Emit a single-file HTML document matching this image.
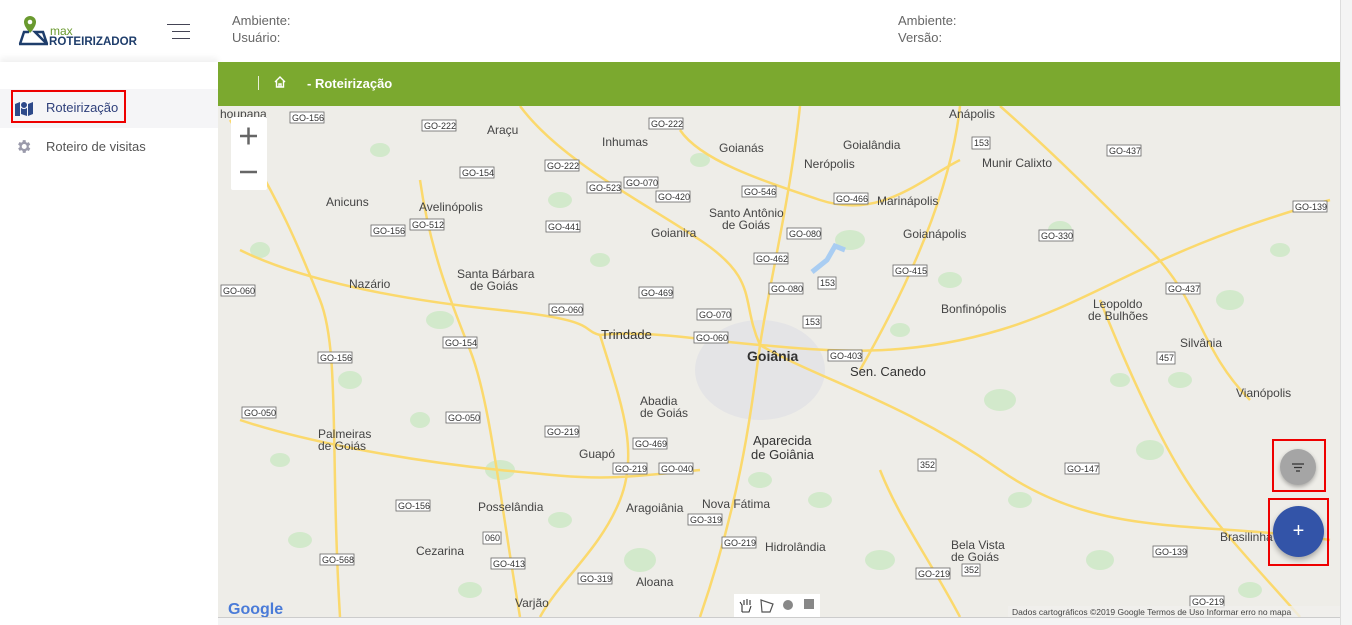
<!DOCTYPE html>
<html><head><meta charset="utf-8"><style>
*{margin:0;padding:0;box-sizing:border-box}
body{width:1352px;height:625px;overflow:hidden;background:#fff;font-family:"Liberation Sans",sans-serif;position:relative}
.hdr{position:absolute;left:0;top:0;width:1340px;height:62px;background:#fff}
.side{position:absolute;left:0;top:62px;width:218px;height:563px;background:#fff;box-shadow:0 -4px 6px rgba(0,0,0,.06)}
.t{position:absolute;font-size:13px;color:#666}
.green{position:absolute;left:218px;top:62px;width:1122px;height:44px;background:#7ba92f;color:#fff;font-size:13px;font-weight:bold}
.sb{position:absolute;left:1340px;top:0;width:12px;height:625px;background:#f4f4f4;border-left:1px solid #ddd}
.city{font-family:"Liberation Sans",sans-serif;font-size:12px;fill:#444}
</style></head><body>
<div class="hdr">
  <svg style="position:absolute;left:18px;top:14px" width="120" height="34" viewBox="0 0 120 34">
    <path d="M12 2a6 6 0 0 1 6 6c0 5-6 11-6 11s-6-6-6-11a6 6 0 0 1 6-6z" fill="#6a9a2f"/><circle cx="12" cy="8" r="2.3" fill="#fff"/>
    <path d="M2 30l4-12h5M17 18h8l4 12z" fill="none" stroke="#1e3d6b" stroke-width="2.5"/>
    <path d="M1 30h29" stroke="#1e3d6b" stroke-width="2.5"/>
    <text x="32" y="21" font-size="12" fill="#6a9a2f" font-family="Liberation Sans">max</text>
    <text x="31" y="31" font-size="12" font-weight="bold" fill="#1e3d6b" font-family="Liberation Sans" textLength="88" lengthAdjust="spacingAndGlyphs">ROTEIRIZADOR</text>
  </svg>
  <div style="position:absolute;left:167px;top:24px;width:23px;height:1px;background:#445"></div>
  <div style="position:absolute;left:172px;top:31px;width:18px;height:1px;background:#445"></div>
  <div style="position:absolute;left:172px;top:38px;width:18px;height:1px;background:#445"></div>
  <div class="t" style="left:232px;top:13px">Ambiente:</div>
  <div class="t" style="left:232px;top:30px">Usuário:</div>
  <div class="t" style="left:898px;top:13px">Ambiente:</div>
  <div class="t" style="left:898px;top:30px">Versão:</div>
</div>
<div class="side">
  <div style="position:absolute;left:0;top:27px;width:218px;height:39px;background:#f5f5f7"></div>
  <div style="position:absolute;left:11px;top:28px;width:115px;height:33px;border:2.5px solid #e00"></div>
  <svg style="position:absolute;left:15px;top:38px" width="18" height="16" viewBox="0 0 18 16"><path d="M0 4l5-2v14l-5 2zM6 2l6 2v12l-6-2zM13 4l5-2v12l-5 2z" fill="#2e4a8a"/><circle cx="9" cy="5" r="3.5" fill="#2e4a8a" stroke="#fff"/></svg>
  <div style="position:absolute;left:46px;top:38px;font-size:13px;color:#2e3f7a">Roteirização</div>
  <svg style="position:absolute;left:15px;top:76px" width="17" height="17" viewBox="0 0 24 24"><path fill="#9a9aab" d="M19.4 13a7.5 7.5 0 0 0 0-2l2.1-1.6-2-3.5-2.5 1a7 7 0 0 0-1.7-1L15 3h-4l-.4 2.7a7 7 0 0 0-1.7 1l-2.5-1-2 3.5L6.6 11a7.5 7.5 0 0 0 0 2l-2.1 1.6 2 3.5 2.5-1a7 7 0 0 0 1.7 1L11 21h4l.4-2.7a7 7 0 0 0 1.7-1l2.5 1 2-3.5zM13 15.5a3.5 3.5 0 1 1 0-7 3.5 3.5 0 0 1 0 7z"/></svg>
  <div style="position:absolute;left:46px;top:77px;font-size:13px;color:#555">Roteiro de visitas</div>
</div>
<div class="green">
  <div style="position:absolute;left:40px;top:14px;width:1px;height:14px;background:#e8f0d8"></div>
  <svg style="position:absolute;left:55px;top:13px" width="14" height="14" viewBox="0 0 14 14"><path d="M2 7l5-5 5 5M3.5 6v6h7V6M6 12V9h2v3" fill="none" stroke="#fff" stroke-width="1.4"/></svg>
  <div style="position:absolute;left:89px;top:14px">- Roteirização</div>
</div>
<svg style="position:absolute;left:218px;top:106px" width="1122" height="511" viewBox="218 106 1122 511">
  <rect x="218" y="106" width="1122" height="511" fill="#eeede8"/>
  <g fill="#d2e9cb">
    <ellipse cx="440" cy="320" rx="14" ry="9"/><ellipse cx="500" cy="470" rx="15" ry="10"/><ellipse cx="300" cy="540" rx="12" ry="8"/>
    <ellipse cx="850" cy="240" rx="15" ry="10"/><ellipse cx="1000" cy="400" rx="16" ry="11"/><ellipse cx="1150" cy="450" rx="14" ry="10"/>
    <ellipse cx="640" cy="560" rx="16" ry="12"/><ellipse cx="880" cy="560" rx="15" ry="10"/><ellipse cx="1060" cy="230" rx="12" ry="9"/>
    <ellipse cx="350" cy="380" rx="12" ry="9"/><ellipse cx="1230" cy="300" rx="14" ry="10"/><ellipse cx="560" cy="200" rx="12" ry="8"/>
    <ellipse cx="760" cy="480" rx="12" ry="8"/><ellipse cx="1100" cy="560" rx="14" ry="10"/><ellipse cx="260" cy="250" rx="10" ry="8"/>
    <ellipse cx="380" cy="150" rx="10" ry="7"/><ellipse cx="600" cy="260" rx="10" ry="7"/><ellipse cx="950" cy="280" rx="12" ry="8"/>
    <ellipse cx="1180" cy="380" rx="12" ry="8"/><ellipse cx="1280" cy="250" rx="10" ry="7"/><ellipse cx="420" cy="420" rx="10" ry="8"/>
    <ellipse cx="560" cy="520" rx="12" ry="8"/><ellipse cx="820" cy="500" rx="12" ry="8"/><ellipse cx="1020" cy="500" rx="12" ry="8"/>
    <ellipse cx="280" cy="460" rx="10" ry="7"/><ellipse cx="900" cy="330" rx="10" ry="7"/><ellipse cx="700" cy="160" rx="10" ry="7"/>
    <ellipse cx="1250" cy="590" rx="12" ry="8"/><ellipse cx="470" cy="590" rx="12" ry="8"/><ellipse cx="1120" cy="380" rx="10" ry="7"/>
  </g>
  <path d="M812 272l15-12 8-14 10 4" stroke="#a9cdf2" stroke-width="5" fill="none"/>
  <ellipse cx="760" cy="370" rx="65" ry="50" fill="#e4e4e6"/>
  <g fill="none" stroke="#fbd96d" stroke-width="2.5">
    <path d="M230 120C280 200 300 250 320 300S330 450 340 617"/>
    <path d="M600 335C650 330 700 340 760 345S900 360 1000 330 1150 250 1330 200"/>
    <path d="M760 345C770 280 790 200 800 106"/>
    <path d="M760 345C750 420 740 500 700 617"/>
    <path d="M760 345C820 380 900 400 1000 470S1200 520 1330 540"/>
    <path d="M520 106C560 160 640 200 700 240S740 300 760 345"/>
    <path d="M240 250C300 280 400 300 500 310S580 330 600 335"/>
    <path d="M600 335C620 400 640 450 620 500S560 580 540 617"/>
    <path d="M960 106C950 200 900 300 860 370"/>
    <path d="M1000 106C1050 150 1100 200 1150 250S1200 350 1250 400"/>
    <path d="M240 420C300 440 400 460 500 470S600 480 700 470"/>
    <path d="M880 470C900 520 930 560 960 617"/>
    <path d="M420 180C430 250 450 300 470 350S500 500 520 617"/>
    <path d="M1100 300C1120 350 1150 420 1180 470S1250 560 1300 617"/>
    <path d="M680 130C700 160 760 180 820 200S920 180 960 160"/>
  </g>
  <g font-family="Liberation Sans" font-size="9" fill="#333">
    <g fill="#fff" stroke="#666" stroke-width="0.8">
      <rect x="290" y="112" width="34" height="11"/><rect x="422" y="120" width="34" height="11"/><rect x="649" y="118" width="34" height="11"/>
      <rect x="545" y="160" width="34" height="11"/><rect x="460" y="167" width="34" height="11"/><rect x="587" y="182" width="34" height="11"/>
      <rect x="624" y="177" width="34" height="11"/><rect x="656" y="191" width="34" height="11"/><rect x="742" y="186" width="34" height="11"/>
      <rect x="834" y="193" width="34" height="11"/><rect x="410" y="219" width="34" height="11"/><rect x="371" y="225" width="34" height="11"/>
      <rect x="546" y="221" width="34" height="11"/><rect x="787" y="228" width="34" height="11"/><rect x="754" y="253" width="34" height="11"/>
      <rect x="893" y="265" width="34" height="11"/><rect x="1039" y="230" width="34" height="11"/><rect x="1293" y="201" width="34" height="11"/>
      <rect x="1107" y="145" width="34" height="11"/><rect x="639" y="287" width="34" height="11"/><rect x="769" y="283" width="34" height="11"/>
      <rect x="549" y="304" width="34" height="11"/><rect x="697" y="309" width="34" height="11"/><rect x="694" y="332" width="34" height="11"/>
      <rect x="443" y="337" width="34" height="11"/><rect x="318" y="352" width="34" height="11"/><rect x="828" y="350" width="34" height="11"/>
      <rect x="1166" y="283" width="34" height="11"/><rect x="221" y="285" width="34" height="11"/><rect x="242" y="407" width="34" height="11"/>
      <rect x="446" y="412" width="34" height="11"/><rect x="545" y="426" width="34" height="11"/><rect x="633" y="438" width="34" height="11"/>
      <rect x="613" y="463" width="34" height="11"/><rect x="659" y="463" width="34" height="11"/><rect x="1065" y="463" width="34" height="11"/>
      <rect x="396" y="500" width="34" height="11"/><rect x="688" y="514" width="34" height="11"/><rect x="722" y="537" width="34" height="11"/>
      <rect x="1153" y="546" width="34" height="11"/><rect x="320" y="554" width="34" height="11"/><rect x="491" y="558" width="34" height="11"/>
      <rect x="578" y="573" width="34" height="11"/><rect x="916" y="568" width="34" height="11"/><rect x="1190" y="596" width="34" height="11"/>
      <rect x="972" y="137" width="18" height="12"/><rect x="818" y="277" width="18" height="12"/><rect x="803" y="316" width="18" height="12"/>
      <rect x="918" y="459" width="18" height="12"/><rect x="962" y="564" width="18" height="12"/><rect x="1157" y="352" width="18" height="12"/><rect x="483" y="532" width="18" height="12"/>
    </g>
    <text x="292" y="121">GO-156</text><text x="424" y="129">GO-222</text><text x="651" y="127">GO-222</text>
    <text x="547" y="169">GO-222</text><text x="462" y="176">GO-154</text><text x="589" y="191">GO-523</text>
    <text x="626" y="186">GO-070</text><text x="658" y="200">GO-420</text><text x="744" y="195">GO-546</text>
    <text x="836" y="202">GO-466</text><text x="412" y="228">GO-512</text><text x="373" y="234">GO-156</text>
    <text x="548" y="230">GO-441</text><text x="789" y="237">GO-080</text><text x="756" y="262">GO-462</text>
    <text x="895" y="274">GO-415</text><text x="1041" y="239">GO-330</text><text x="1295" y="210">GO-139</text>
    <text x="1109" y="154">GO-437</text><text x="641" y="296">GO-469</text><text x="771" y="292">GO-080</text>
    <text x="551" y="313">GO-060</text><text x="699" y="318">GO-070</text><text x="696" y="341">GO-060</text>
    <text x="445" y="346">GO-154</text><text x="320" y="361">GO-156</text><text x="830" y="359">GO-403</text>
    <text x="1168" y="292">GO-437</text><text x="223" y="294">GO-060</text><text x="244" y="416">GO-050</text>
    <text x="448" y="421">GO-050</text><text x="547" y="435">GO-219</text><text x="635" y="447">GO-469</text>
    <text x="615" y="472">GO-219</text><text x="661" y="472">GO-040</text><text x="1067" y="472">GO-147</text>
    <text x="398" y="509">GO-156</text><text x="690" y="523">GO-319</text><text x="724" y="546">GO-219</text>
    <text x="1155" y="555">GO-139</text><text x="322" y="563">GO-568</text><text x="493" y="567">GO-413</text>
    <text x="580" y="582">GO-319</text><text x="918" y="577">GO-219</text><text x="1192" y="605">GO-219</text>
    <text x="974" y="146">153</text><text x="820" y="286">153</text><text x="805" y="325">153</text><text x="920" y="468">352</text>
    <text x="964" y="573">352</text><text x="1159" y="361">457</text><text x="485" y="541">060</text>
  </g>
  <g class="city">
    <text x="949" y="118">Anápolis</text><text x="487" y="134">Araçu</text><text x="602" y="146">Inhumas</text><text x="719" y="152">Goianás</text>
    <text x="843" y="149">Goialândia</text><text x="804" y="168">Nerópolis</text><text x="982" y="167">Munir Calixto</text>
    <text x="326" y="206">Anicuns</text><text x="419" y="211">Avelinópolis</text><text x="709" y="217">Santo Antônio</text><text x="722" y="229">de Goiás</text>
    <text x="651" y="237">Goianira</text><text x="877" y="205">Marinápolis</text><text x="903" y="238">Goianápolis</text>
    <text x="457" y="278">Santa Bárbara</text><text x="470" y="290">de Goiás</text><text x="349" y="288">Nazário</text>
    <text x="941" y="313">Bonfinópolis</text><text x="1093" y="308">Leopoldo</text><text x="1088" y="320">de Bulhões</text>
    <text x="1180" y="347">Silvânia</text><text x="1236" y="397">Vianópolis</text>
    <text x="640" y="405">Abadia</text><text x="640" y="417">de Goiás</text><text x="318" y="438">Palmeiras</text><text x="318" y="450">de Goiás</text>
    <text x="579" y="458">Guapó</text><text x="702" y="508">Nova Fátima</text><text x="478" y="511">Posselândia</text><text x="626" y="512">Aragoiânia</text>
    <text x="765" y="551">Hidrolândia</text><text x="951" y="549">Bela Vista</text><text x="951" y="561">de Goiás</text>
    <text x="416" y="555">Cezarina</text><text x="1220" y="541">Brasilinha</text><text x="636" y="586">Aloana</text><text x="515" y="607">Varjão</text>
    <text x="220" y="118">houpana</text>
  </g>
  <g font-family="Liberation Sans" fill="#333"><text x="601" y="339" font-size="13">Trindade</text><text x="747" y="361" font-size="14" font-weight="bold">Goiânia</text>
  <text x="850" y="376" font-size="13">Sen. Canedo</text><text x="753" y="445" font-size="13">Aparecida</text><text x="751" y="459" font-size="13">de Goiânia</text></g>
  <rect x="231" y="117" width="36" height="73" fill="#fff" rx="2"/>
  <path d="M240 136h17M248.5 127.5v17M240 172h17" stroke="#666" stroke-width="2.5"/>
  <text x="228" y="614" font-family="Liberation Sans" font-size="16" font-weight="bold" fill="#4a7bd8">Google</text>
  <rect x="1008" y="606" width="332" height="11" fill="#f0efec" opacity=".8"/>
  <text x="1012" y="615" font-family="Liberation Sans" font-size="8.5" fill="#444">Dados cartográficos ©2019 Google     Termos de Uso     Informar erro no mapa</text>
  <rect x="734" y="594" width="86" height="23" fill="#fff"/>
  <path d="M742 612v-7l-2-3M744 605v-5M747 605v-6M750 605v-5M742 612h7l2-6" stroke="#333" fill="none" stroke-width="1.1"/>
  <path d="M761 600l12 4-3 8-8 0z" stroke="#555" fill="none" stroke-width="1.2"/>
  <circle cx="788" cy="605" r="5" fill="#888"/><rect x="804" y="599" width="10" height="10" fill="#888"/>
</svg>
<div style="position:absolute;left:1272px;top:439px;width:54px;height:53px;border:2.5px solid #e00"></div>
<div style="position:absolute;left:1280px;top:449px;width:36px;height:36px;border-radius:50%;background:#a5a5a5;box-shadow:0 2px 4px rgba(0,0,0,.3)"></div>
<svg style="position:absolute;left:1292px;top:463px" width="12" height="9"><path d="M0 1h12M2 4.5h8M4 8h4" stroke="#333" stroke-width="1.3"/></svg>
<div style="position:absolute;left:1268px;top:498px;width:61px;height:68px;border:2.5px solid #e00"></div>
<div style="position:absolute;left:1273px;top:506px;width:51px;height:51px;border-radius:50%;background:#3354a8;box-shadow:0 3px 6px rgba(0,0,0,.3);color:#fff;font-size:20px;text-align:center;line-height:50px">+</div>
<div style="position:absolute;left:218px;top:617px;width:1122px;height:8px;background:#f4f4f4;border-top:1px solid #ccc"></div>
<div class="sb"></div>
</body></html>
